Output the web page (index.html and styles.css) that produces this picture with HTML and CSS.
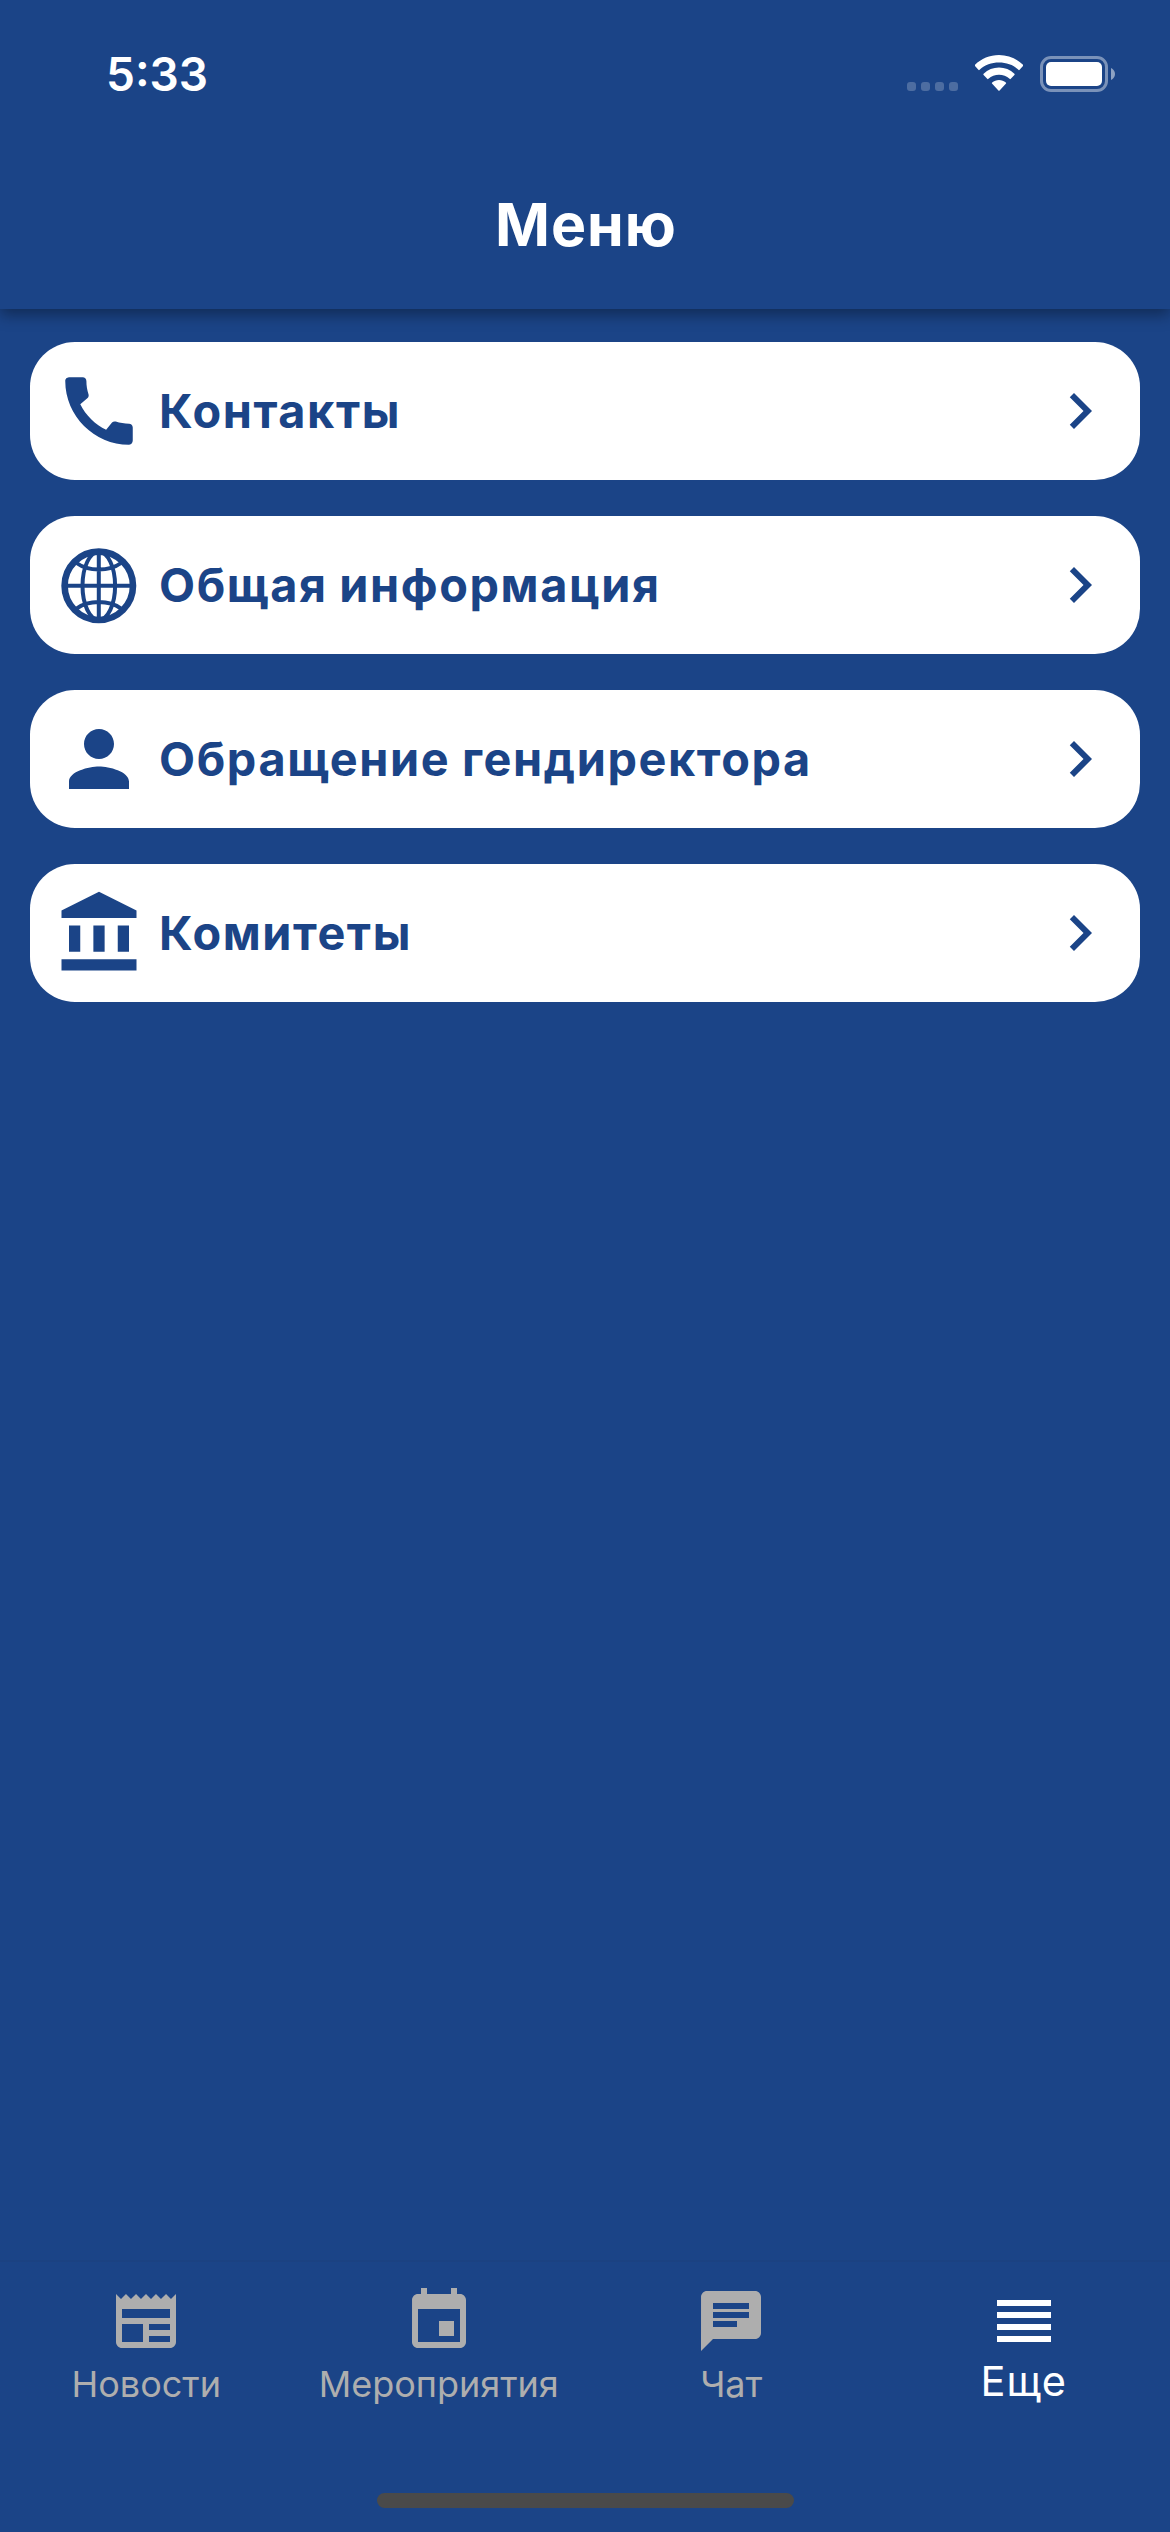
FILE: index.html
```html
<!DOCTYPE html>
<html lang="ru">
<head>
    <meta charset="UTF-8">
    <meta name="viewport" content="width=device-width, initial-scale=1.0">
    <title>Меню</title>
    <link rel="stylesheet" href="styles.css">
</head>
<body>
    <div class="header">
        <div class="status-bar">
            <div class="time">5:33</div>
            <div class="status-icons">
                <div class="signal">
                    <span></span><span></span><span></span><span></span>
                </div>
                <svg class="wifi" viewBox="0 0 48 36">
                    <path d="M24 0C33.200 0 41.800 3.600 48 9.800a.8.8 0 0 1 0 1.200l-3.400 3.800a.8.8 0 0 1-1.200 0C38.200 9.800 31.400 7.600 24 7.600S9.800 9.800 4.600 14.800a.8.8 0 0 1-1.200 0L0 11a.8.8 0 0 1 0-1.200C6.200 3.600 14.800 0 24 0z"/>
                    <path d="M24 12.600c5.800 0 11.200 2.200 15.400 6.200a.8.8 0 0 1 0 1.200l-3.600 3.800a.8.8 0 0 1-1.200 0C31.600 21.200 28 19.800 24 19.800s-7.600 1.400-10.600 4a.8.8 0 0 1-1.200 0L8.600 20a.8.8 0 0 1 0-1.200c4.200-4 9.600-6.200 15.400-6.200z"/>
                    <path d="M24 25c2.600 0 5 1 6.800 2.600a.8.8 0 0 1 0 1.200l-6.200 6.600a.8.8 0 0 1-1.200 0l-6.200-6.600a.8.8 0 0 1 0-1.200C19 26 21.400 25 24 25z"/>
                </svg>
                <svg class="battery" viewBox="0 0 75 36">
                    <rect class="battery-frame" x="1.500" y="1.500" width="65" height="33" rx="9.500"/>
                    <rect x="6" y="6" width="56" height="24" rx="5"/>
                    <path class="battery-cap" d="M71 12c2.400 1 4 3.400 4 6s-1.600 5-4 6z"/>
                </svg>
            </div>
        </div>
        <h1>Меню</h1>
    </div>

    <div class="menu">
        <a class="menu-item">
            <svg class="menu-icon" viewBox="0 0 24 24"><path d="M20.010 15.380c-1.230 0-2.420-.2-3.530-.56-.35-.12-.74-.03-1.010.24l-1.570 1.970c-2.830-1.350-5.480-3.900-6.890-6.830l1.950-1.660c.27-.28.35-.67.24-1.020-.37-1.110-.56-2.300-.56-3.530 0-.54-.45-.99-.99-.99H4.190C3.650 3 3 3.240 3 3.990 3 13.280 10.730 21 20.010 21c.71 0 .99-.63.99-1.180v-3.450c0-.54-.45-.99-.99-.99z"/></svg>
            <span class="menu-title">Контакты</span>
            <svg class="chevron" viewBox="0 0 24 24"><path d="M10 6L8.590 7.410 13.170 12l-4.580 4.590L10 18l6-6z"/></svg>
        </a>
        <a class="menu-item">
            <svg class="menu-icon globe" viewBox="0 0 90 90">
                <circle class="globe-ring" cx="44.800" cy="45.800" r="34.200"/>
                <ellipse cx="44.800" cy="45.800" rx="16.300" ry="34"/>
                <path d="M44.800 12v68M11 45.800h68M22.500 23c12 8.700 32.600 8.700 44.600 0M22.500 68.600c12-8.700 32.600-8.700 44.600 0"/>
            </svg>
            <span class="menu-title">Общая информация</span>
            <svg class="chevron" viewBox="0 0 24 24"><path d="M10 6L8.590 7.410 13.170 12l-4.580 4.590L10 18l6-6z"/></svg>
        </a>
        <a class="menu-item">
            <svg class="menu-icon" viewBox="0 0 24 24"><path d="M12 12c2.210 0 4-1.790 4-4s-1.790-4-4-4-4 1.790-4 4 1.790 4 4 4zm0 2c-2.670 0-8 1.340-8 4v2h16v-2c0-2.660-5.330-4-8-4z"/></svg>
            <span class="menu-title">Обращение гендиректора</span>
            <svg class="chevron" viewBox="0 0 24 24"><path d="M10 6L8.590 7.410 13.170 12l-4.580 4.590L10 18l6-6z"/></svg>
        </a>
        <a class="menu-item">
            <svg class="menu-icon" viewBox="0 0 24 24"><path d="M4 10h3v7H4zM10.500 10h3v7h-3zM2 19h20v3H2zM17 10h3v7h-3zM12 1L2 6v2h20V6z"/></svg>
            <span class="menu-title">Комитеты</span>
            <svg class="chevron" viewBox="0 0 24 24"><path d="M10 6L8.590 7.410 13.170 12l-4.580 4.590L10 18l6-6z"/></svg>
        </a>
    </div>

    <div class="footer">
        <div class="tabs">
            <a class="tab">
                <svg class="tab-icon" viewBox="0 0 24 24"><path d="M22 3l-1.670 1.670L18.670 3 17 4.670 15.330 3l-1.660 1.670L12 3l-1.670 1.670L8.670 3 7 4.670 5.330 3 3.670 4.670 2 3v16c0 1.100.9 2 2 2h16c1.100 0 2-.9 2-2V3zM11 19H4v-6h7v6zm9 0h-7v-2h7v2zm0-4h-7v-2h7v2zm0-4H4V8h16v3z"/></svg>
                <span class="tab-title">Новости</span>
            </a>
            <a class="tab">
                <svg class="tab-icon" viewBox="0 0 24 24"><path d="M17 12h-5v5h5v-5zM16 1v2H8V1H6v2H5c-1.110 0-1.990.9-1.990 2L3 19c0 1.100.89 2 2 2h14c1.100 0 2-.9 2-2V5c0-1.100-.9-2-2-2h-1V1h-2zm3 18H5V8h14v11z"/></svg>
                <span class="tab-title">Мероприятия</span>
            </a>
            <a class="tab">
                <svg class="tab-icon" viewBox="0 0 24 24"><path d="M20 2H4c-1.100 0-1.990.9-1.990 2L2 22l4-4h14c1.100 0 2-.9 2-2V4c0-1.100-.9-2-2-2zM6 9h12v2H6V9zm8 5H6v-2h8v2zm4-6H6V6h12v2z"/></svg>
                <span class="tab-title">Чат</span>
            </a>
            <a class="tab active">
                <svg class="tab-icon" viewBox="0 0 24 24"><path d="M3 15h18v-2H3v2zm0 4h18v-2H3v2zm0-8h18V9H3v2zm0-6v2h18V5H3z"/></svg>
                <span class="tab-title">Еще</span>
            </a>
        </div>
        <div class="home-indicator"></div>
    </div>
</body>
</html>
```
FILE: styles.css
```css
* {
    margin: 0;
    padding: 0;
    box-sizing: border-box;
}

body {
    display: flex;
    flex-direction: column;
    width: 1170px;
    height: 2532px;
    background-color: #1b4487;
    color: #fff;
    font-family: Inter, 'Liberation Sans', sans-serif;
    overflow: hidden;
}

svg {
    display: block;
    fill: currentColor;
    flex-shrink: 0;
}

/* Header */
.header {
    height: 309px;
    background-color: #1b4487;
    box-shadow: 0 6px 14px rgba(0, 0, 0, 0.36);
}

.status-bar {
    display: flex;
    justify-content: space-between;
    height: 141px;
    padding: 55px 55px 0 106px;
}

.time {
    height: 40px;
    font-size: 46px;
    font-weight: 600;
    line-height: 39px;
}

.status-icons {
    display: flex;
    align-items: flex-start;
}

.signal {
    display: flex;
    gap: 5px;
    margin: 27px 17px 0 0;
}

.signal span {
    width: 9px;
    height: 9px;
    border-radius: 3px;
    background-color: rgba(255, 255, 255, 0.22);
}

.wifi {
    width: 48px;
    height: 36px;
    margin-right: 17px;
}

.battery {
    width: 75px;
    height: 36px;
    margin-top: 1px;
}

.battery-frame {
    fill: none;
    stroke: rgba(255, 255, 255, 0.42);
    stroke-width: 3;
}

.battery-cap {
    fill: rgba(255, 255, 255, 0.5);
}

.header h1 {
    padding-left: 2px;
    font-size: 59px;
    font-weight: 700;
    line-height: 168px;
    text-align: center;
    letter-spacing: 1px;
}

/* Menu list */
.menu {
    display: flex;
    flex: 1;
    flex-direction: column;
    gap: 36px;
    padding: 33px 30px 0;
}

.menu-item {
    display: flex;
    align-items: center;
    height: 138px;
    padding: 0 24px;
    border-radius: 45px;
    background-color: #fff;
    color: #1b4487;
}

.menu-icon {
    width: 90px;
    height: 90px;
}

.globe {
    fill: none;
    stroke: currentColor;
    stroke-width: 4;
}

.globe-ring {
    stroke-width: 6.6;
}

.menu-title {
    flex: 1;
    padding-left: 15px;
    font-size: 46.8px;
    font-weight: 700;
    line-height: 56px;
    letter-spacing: 1.6px;
    word-spacing: -1px;
}

.chevron {
    width: 72px;
    height: 72px;
}

/* Bottom navigation */
.footer {
    display: flex;
    flex-direction: column;
    align-items: center;
    height: 272px;
    border-top: 2px solid #1b4282;
}

.tabs {
    display: flex;
    width: 100%;
    height: 231px;
    padding-top: 23px;
}

.tab {
    display: flex;
    flex: 1;
    flex-direction: column;
    align-items: center;
    color: #aeaeae;
}

.tab-icon {
    width: 72px;
    height: 72px;
}

.tab-title {
    margin-top: 6px;
    font-size: 36px;
    line-height: 42px;
}

.active {
    color: #fff;
}

.active .tab-title {
    margin-top: 3px;
    font-size: 41.5px;
    letter-spacing: 1px;
}

.home-indicator {
    width: 417px;
    height: 15px;
    border-radius: 8px;
    background-color: #4a4a4a;
}
```
